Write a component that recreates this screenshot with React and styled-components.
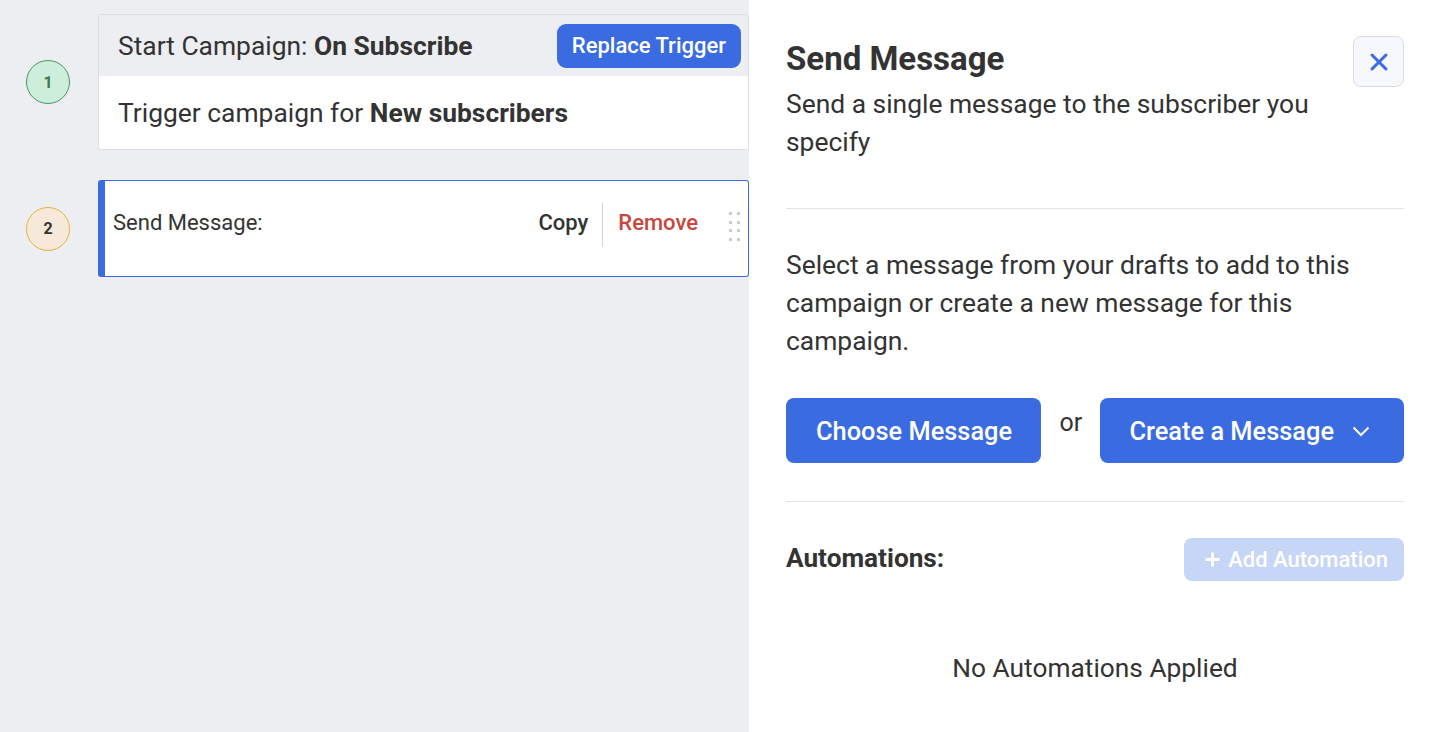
import React from 'react';
import styled, { createGlobalStyle } from 'styled-components';

const GlobalStyle = createGlobalStyle`
  html, body {
    margin: 0;
    padding: 0;
    height: 100%;
    overflow: hidden;
  }
  body {
    font-family: Roboto, "Liberation Sans", sans-serif;
    color: #333;
  }
`;

const Page = styled.div`
  display: flex;
  width: 1434px;
  height: 732px;
`;

const Canvas = styled.div`
  width: 749px;
  flex-shrink: 0;
  background: #edeef2;
  padding: 14px 0 0 0;
  box-sizing: border-box;
  display: flex;
  flex-direction: column;
  gap: 30px;
`;

const StepRow = styled.div`
  display: flex;
  align-items: center;
`;

const StepBadge = styled.div`
  width: 42px;
  height: 42px;
  margin: 0 28px 0 26px;
  border-radius: 50%;
  border: 1px solid ${({ $border }) => $border};
  background: ${({ $bg }) => $bg};
  color: ${({ $color }) => $color};
  display: flex;
  align-items: center;
  justify-content: center;
  font-size: 16px;
  font-weight: 700;
  flex-shrink: 0;
`;

const TriggerCard = styled.div`
  flex: 1;
  border: 1px solid #dcdee3;
  border-radius: 3px;
  overflow: hidden;
`;

const TriggerHeader = styled.div`
  display: flex;
  align-items: center;
  justify-content: space-between;
  height: 61px;
  padding: 0 7px 0 19px;
  background: #edeef2;
  font-size: 26.4px;
`;

const TriggerBody = styled.div`
  background: #fff;
  height: 73px;
  display: flex;
  align-items: center;
  padding: 0 19px;
  font-size: 26.4px;
`;

const PrimaryButton = styled.button`
  border: none;
  background: ${({ $disabled }) => ($disabled ? '#c5d6f6' : '#3a6be0')};
  color: #fff;
  font-family: Roboto, "Liberation Sans", sans-serif;
  font-weight: 500;
  font-size: ${({ $size }) => $size || 25.4}px;
  height: ${({ $height }) => $height || 65}px;
  padding: 0 ${({ $padR }) => $padR ?? 29}px 0 ${({ $padL }) => $padL ?? 30}px;
  border-radius: ${({ $radius }) => $radius || 8}px;
  display: flex;
  align-items: center;
  gap: ${({ $gap }) => $gap ?? 8}px;
  cursor: pointer;
  white-space: nowrap;
`;

const ActionCard = styled.div`
  flex: 1;
  height: 97px;
  box-sizing: border-box;
  background: #fff;
  border: 1px solid #3a6be0;
  border-left: 7px solid #3a6be0;
  border-radius: 3px;
  display: flex;
  align-items: flex-start;
  padding: 22px 8px 0 8px;
`;

const ActionTitle = styled.div`
  flex: 1;
  font-size: 22px;
  line-height: 40px;
`;

const ActionLink = styled.span`
  font-size: 22px;
  font-weight: 500;
  line-height: 40px;
  color: ${({ $danger }) => ($danger ? '#c8463e' : '#333')};
  padding: ${({ $danger }) => ($danger ? '0 0 0 15px' : '0 14px 0 0')};
`;

const Divider = styled.div`
  width: 1px;
  height: 44px;
  background: #cdd2e2;
`;

const DragHandle = styled.div`
  display: grid;
  grid-template-columns: 3px 3px;
  column-gap: 5px;
  row-gap: 5.5px;
  margin: 9px 0 0 31px;
  span {
    width: 3px;
    height: 3px;
    background: #c6c9d6;
  }
`;

const Panel = styled.div`
  flex: 1;
  min-width: 0;
  background: #fff;
  padding: 36px 30px 0 37px;
  box-sizing: border-box;
  display: flex;
  flex-direction: column;
`;

const PanelHead = styled.div`
  display: flex;
  justify-content: space-between;
  align-items: flex-start;
  padding-bottom: 47px;
  border-bottom: 1px solid #e2e3e6;
`;

const Title = styled.h2`
  margin: 4px 0 0;
  font-size: 33px;
  font-weight: 700;
  line-height: 38px;
`;

const Text = styled.p`
  margin: ${({ $top }) => $top || 0}px 0 0;
  font-size: 26.4px;
  line-height: 38px;
  max-width: ${({ $max }) => $max || 'none'};
`;

const CloseButton = styled.button`
  width: 51px;
  height: 51px;
  border-radius: 8px;
  border: 1px solid #d9dce5;
  background: #f6f8fd;
  display: flex;
  align-items: center;
  justify-content: center;
  padding: 0;
  flex-shrink: 0;
`;

const Section = styled.div`
  padding: 37px 0 38px;
  border-bottom: 1px solid #e2e3e6;
`;

const ButtonRow = styled.div`
  display: flex;
  align-items: flex-start;
  margin-top: 38px;
`;

const Or = styled.span`
  font-size: 25px;
  line-height: 50px;
  width: 60px;
  text-align: center;
`;

const AutomationsRow = styled.div`
  display: flex;
  justify-content: space-between;
  align-items: flex-start;
  padding-top: 36px;
`;

const Label = styled.div`
  font-size: 26.2px;
  font-weight: 700;
  line-height: 40px;
`;

const Empty = styled.div`
  text-align: center;
  font-size: 26.3px;
  margin-top: 67px;
  line-height: 40px;
`;

export default function App() {
  return (
    <Page>
      <GlobalStyle />
      <Canvas>
        <StepRow>
          <StepBadge $bg="#cdeedb" $border="#4d9466" $color="#3c7a4f">1</StepBadge>
          <TriggerCard>
            <TriggerHeader>
              <span>
                Start Campaign: <b>On Subscribe</b>
              </span>
              <PrimaryButton $size={22} $height={44} $padL={15} $padR={15} $radius={9}>
                Replace Trigger
              </PrimaryButton>
            </TriggerHeader>
            <TriggerBody>
              <span>
                Trigger campaign for <b>New subscribers</b>
              </span>
            </TriggerBody>
          </TriggerCard>
        </StepRow>
        <StepRow>
          <StepBadge $bg="#f6e9d9" $border="#e9b13f" $color="#333">2</StepBadge>
          <ActionCard>
            <ActionTitle>Send Message:</ActionTitle>
            <ActionLink>Copy</ActionLink>
            <Divider />
            <ActionLink $danger>Remove</ActionLink>
            <DragHandle>
              {Array.from({ length: 8 }).map((_, i) => (
                <span key={i} />
              ))}
            </DragHandle>
          </ActionCard>
        </StepRow>
      </Canvas>
      <Panel>
        <PanelHead>
          <div>
            <Title>Send Message</Title>
            <Text $max="540px" $top={7}>
              Send a single message to the subscriber you specify
            </Text>
          </div>
          <CloseButton aria-label="Close">
            <svg width="20" height="20" viewBox="0 0 20 20">
              <path d="M3 3 L17 17 M17 3 L3 17" stroke="#3a6be0" strokeWidth="3" strokeLinecap="round" />
            </svg>
          </CloseButton>
        </PanelHead>
        <Section>
          <Text>
            Select a message from your drafts to add to this campaign or create a new message for this
            campaign.
          </Text>
          <ButtonRow>
            <PrimaryButton>Choose Message</PrimaryButton>
            <Or>or</Or>
            <PrimaryButton $padL={29} $padR={34} $gap={18}>
              Create a Message
              <svg width="18" height="12" viewBox="0 0 18 12">
                <path d="M1.5 2.5 L9 10 L16.5 2.5" stroke="#fff" strokeWidth="2" fill="none" />
              </svg>
            </PrimaryButton>
          </ButtonRow>
        </Section>
        <AutomationsRow>
          <Label>Automations:</Label>
          <PrimaryButton $disabled $size={22} $height={43} $padL={21} $padR={16} $gap={8} $radius={8}>
            <svg width="15" height="15" viewBox="0 0 15 15">
              <path d="M7.5 0.5 V14.5 M0.5 7.5 H14.5" stroke="#fff" strokeWidth="3" />
            </svg>
            Add Automation
          </PrimaryButton>
        </AutomationsRow>
        <Empty>No Automations Applied</Empty>
      </Panel>
    </Page>
  );
}
